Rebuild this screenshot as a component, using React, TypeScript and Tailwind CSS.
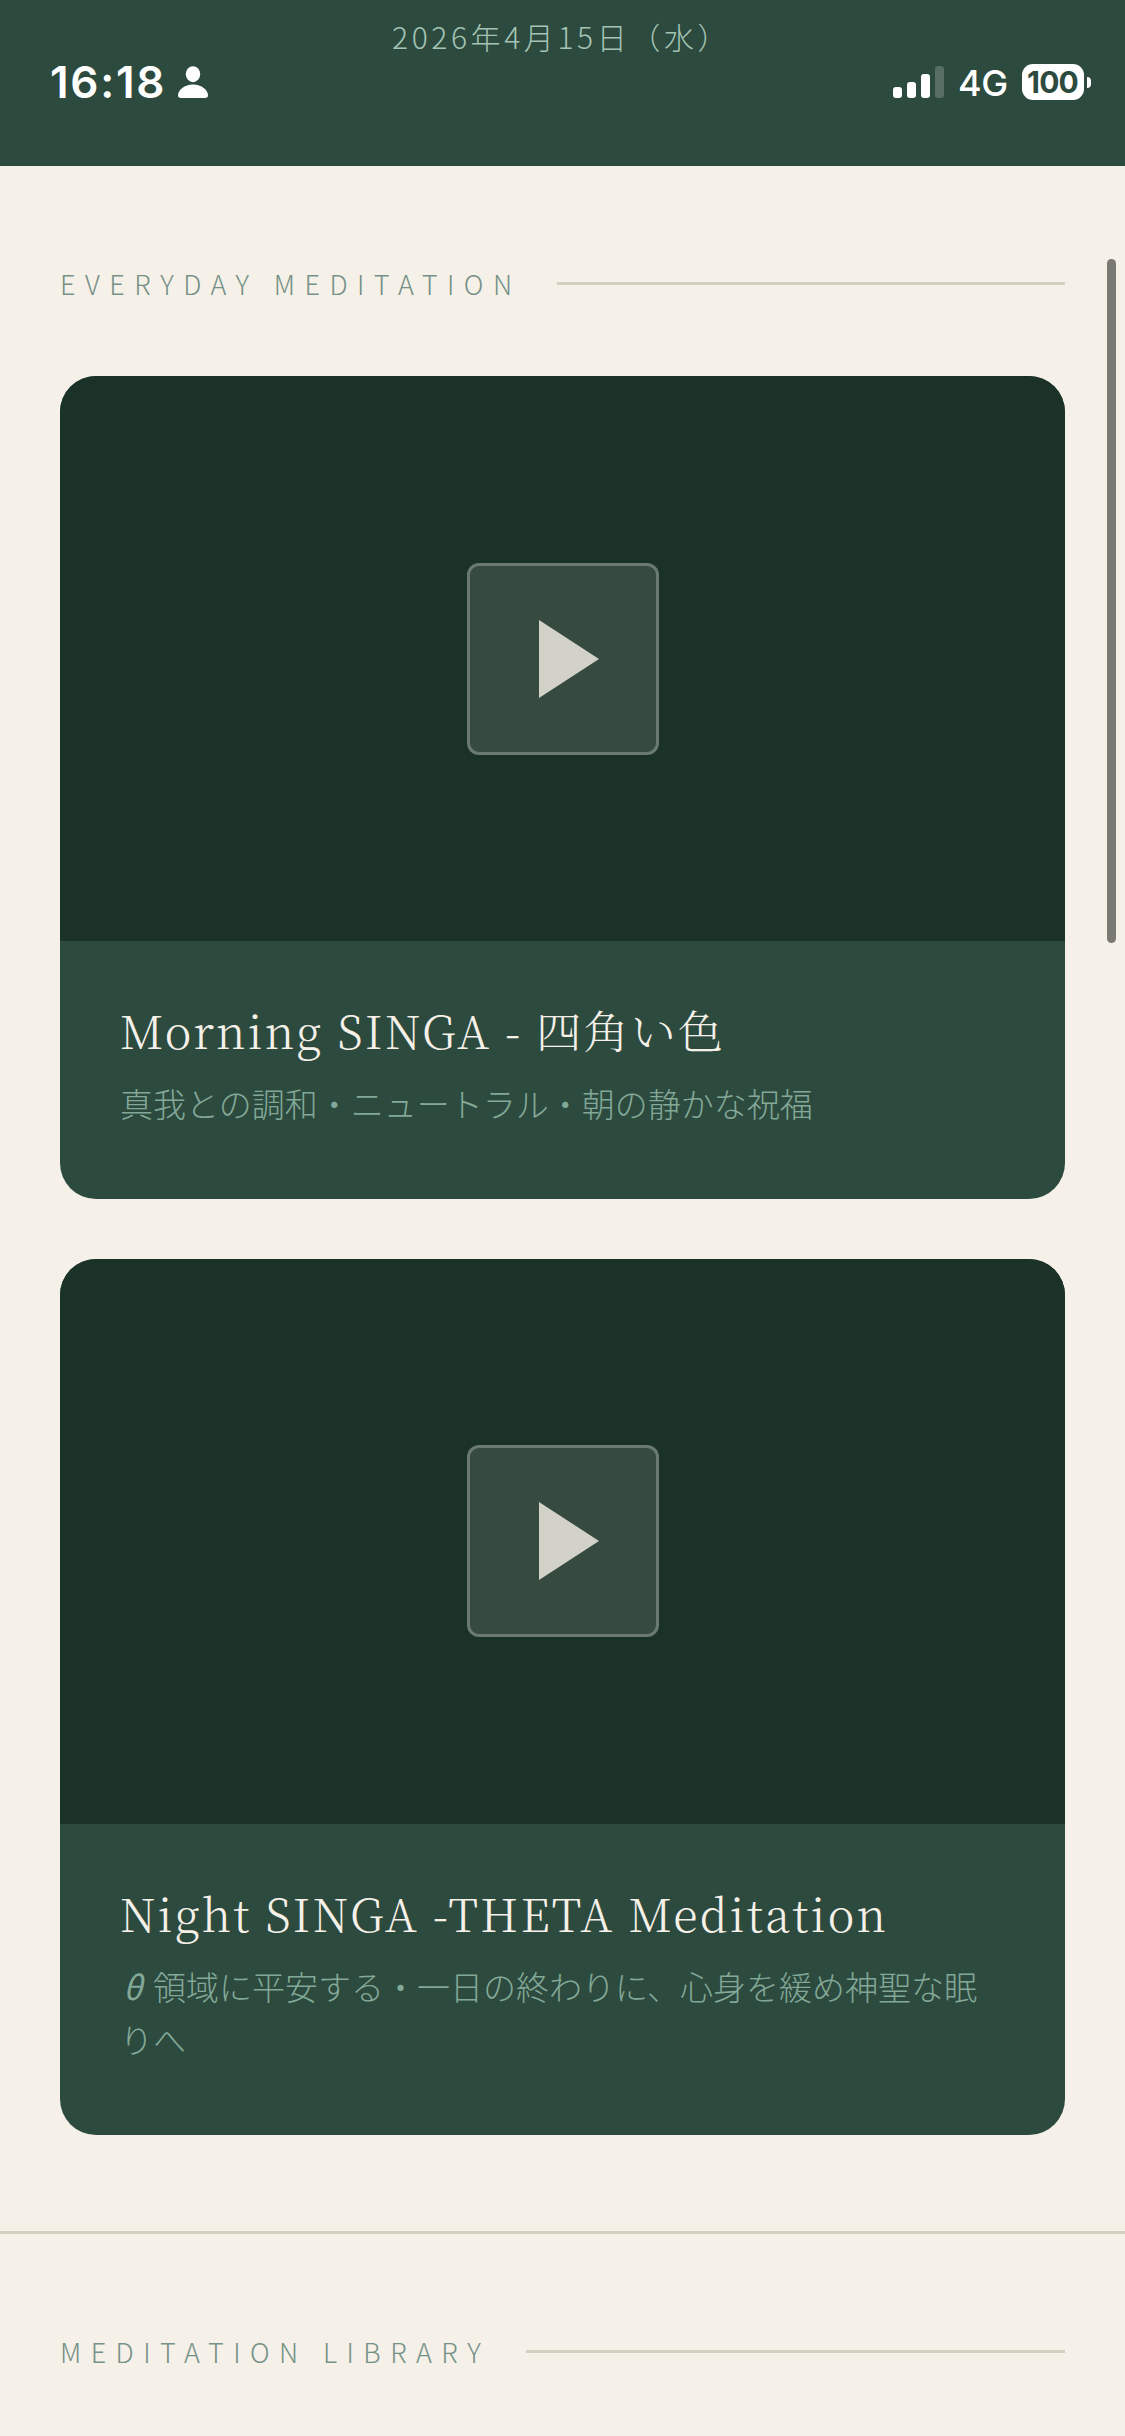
import React from "react";

const sessions = [
  {
    title: "Morning SINGA - ",
    titleJa: "四角い色",
    mark: "",
    description: "真我との調和・ニュートラル・朝の静かな祝福",
  },
  {
    title: "Night SINGA -THETA Meditation",
    titleJa: "",
    mark: "θ",
    description: "領域に平安する・一日の終わりに、心身を緩め神聖な眠りへ",
  },
];

function StatusBar() {
  return (
    <div className="flex h-[44px] items-center justify-between pl-[50px] pr-[34px] text-white">
      <div className="flex items-center">
        <span className="w-[128px] whitespace-nowrap font-['Inter'] text-[44px] font-semibold leading-[44px] tracking-[1.7px]">16:18</span>
        <svg className="h-[32px] w-[30px]" viewBox="0 0 30 32" fill="currentColor">
          <ellipse cx="15" cy="8.2" rx="7.2" ry="8" />
          <path d="M3 32C1 32 0 31 0 29.300C0 24 6.500 18.500 15 18.500C23.500 18.500 30 24 30 29.300C30 31 29 32 27 32Z" />
        </svg>
      </div>
      <div className="flex items-center">
        <div className="flex h-[32px] items-end gap-[5px]">
          <span className="h-[11px] w-[9px] rounded-[3px] bg-white" />
          <span className="h-[16px] w-[9px] rounded-[3px] bg-white" />
          <span className="h-[24px] w-[9px] rounded-[3px] bg-white" />
          <span className="h-[32px] w-[9px] rounded-[3px] bg-white/20" />
        </div>
        <span className="ml-[14px] w-[64px] whitespace-nowrap pt-[2px] font-['Inter'] text-[36px] font-medium leading-[44px] tracking-[-0.5px]">4G</span>
        <span className="flex h-[36px] w-[62px] items-center justify-center rounded-[11px] bg-white pr-px font-['Inter'] text-[30px] font-bold tracking-[-0.8px] text-[#2d4a3e]">
          100
        </span>
        <span className="ml-[3px] h-[11px] w-[4px] rounded-r-full bg-white" />
      </div>
    </div>
  );
}

function SectionLabel({ children }: { children: React.ReactNode }) {
  return (
    <div className="flex h-[42px] gap-[36px]">
      <h2 className="whitespace-nowrap text-[27px] font-extralight leading-[42px] tracking-[0.35em] text-[#769187]">{children}</h2>
      <span className="mt-[19px] h-[3px] flex-1 bg-[#d4cfc0]" />
    </div>
  );
}

function SessionCard({ session }: { session: (typeof sessions)[number] }) {
  return (
    <article className="overflow-hidden rounded-[36px] bg-[#2d4a3e]">
      <div className="flex aspect-video items-center justify-center bg-[#1b3229]">
        <div className="flex h-[192px] w-[192px] items-center justify-center rounded-[12px] border-[3px] border-[#6a7a70] bg-[#364a3f]">
          <svg className="ml-[12px] h-[78px] w-[60px]" viewBox="0 0 60 78" fill="#d3d2c8">
            <path d="M0 0L60 39L0 78Z" />
          </svg>
        </div>
      </div>
      <div className="px-[60px] pb-[67.8px] pt-[51px]">
        <h3 className="h-[76px] whitespace-pre font-['Noto_Serif_CJK_JP','Liberation_Serif','Noto_Sans_CJK_JP',serif] text-[45px] font-light leading-[76px] tracking-[2.2px] text-[#f5f0e8]">
          {session.title}
          {session.titleJa && <span>{session.titleJa}</span>}
        </h3>
        <p className="mt-[9px] text-[33px] font-extralight leading-[53.5px] text-[#82a898]">
          {session.mark && <span className="inline-block w-[33px] pl-[3px] font-normal italic">{session.mark}</span>}
          {session.description}
        </p>
      </div>
    </article>
  );
}

export default function App() {
  return (
    <div className="relative h-[2436px] w-[1125px] overflow-hidden bg-[#f5f0e8] font-['Noto_Sans_CJK_JP',sans-serif]">
      <header className="h-[166px] bg-[#2d4a3e] pt-[14px]">
        <p className="mb-[2px] whitespace-nowrap pl-[392px] text-[30px] font-extralight leading-[44px] tracking-[0.12em] text-[#a3c4b5]">2026年4月15日（水）</p>
        <StatusBar />
      </header>

      <main>
        <section className="border-b-[3px] border-[#d4cfc0] px-[60px] pb-[96.3px] pt-[97px]">
          <SectionLabel>EVERYDAY MEDITATION</SectionLabel>
          <div className="mt-[71px] flex flex-col gap-[60px]">
            {sessions.map((session) => (
              <SessionCard key={session.title} session={session} />
            ))}
          </div>
        </section>
        <section className="px-[60px] pt-[97px]">
          <SectionLabel>MEDITATION LIBRARY</SectionLabel>
        </section>
      </main>

      <div className="absolute right-[9px] top-[259px] h-[684px] w-[9px] rounded-full bg-[#7b7974]" />
    </div>
  );
}
